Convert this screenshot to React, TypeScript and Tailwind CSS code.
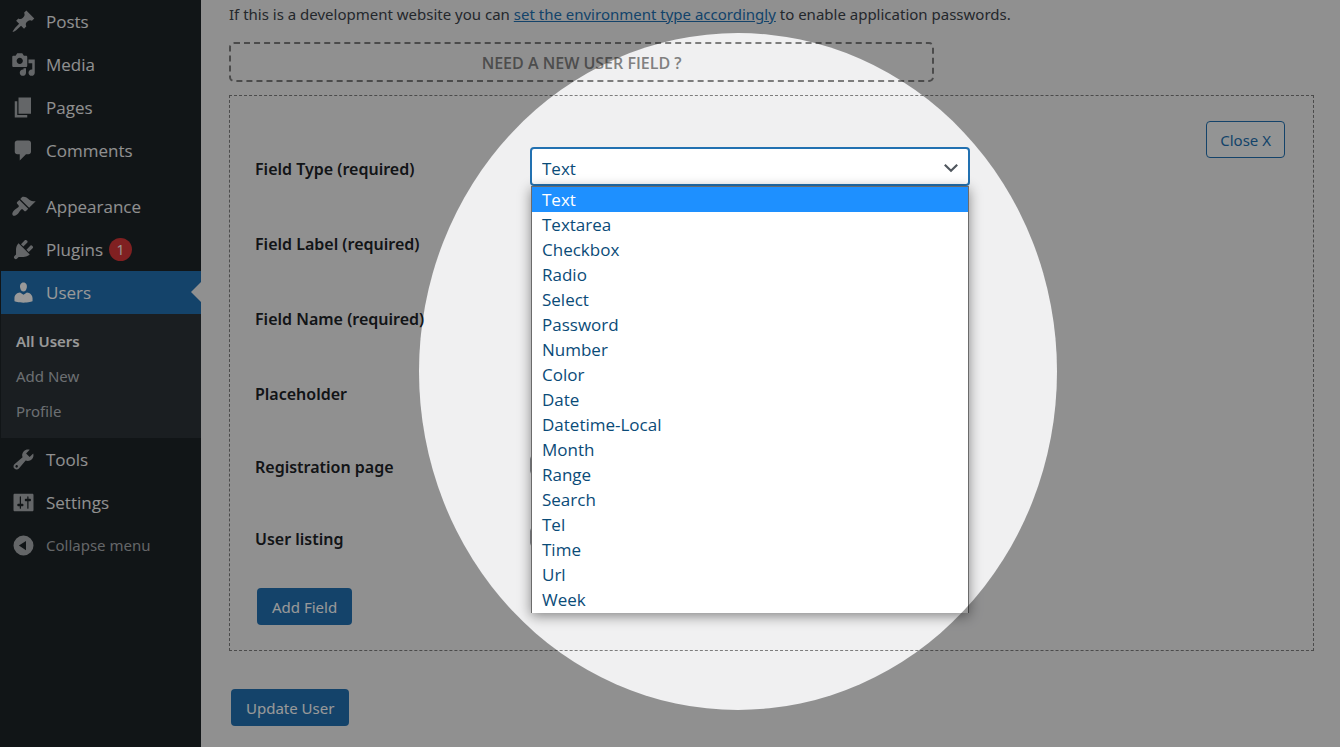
import type { ReactNode } from "react";

const icons = {
  post: "M10.44 3.02l1.82-1.82 6.36 6.35-1.83 1.82c-1.05-.68-2.48-.57-3.41.36l-.75.75c-.92.93-1.04 2.35-.35 3.41l-1.83 1.82-2.41-2.41-2.8 2.79c-.42.42-3.38 2.71-3.8 2.29s1.86-3.39 2.28-3.81l2.79-2.79L4.1 9.36l1.83-1.82c1.05.69 2.48.57 3.4-.36l.75-.75c.93-.92 1.05-2.35.36-3.41z",
  media:
    "M13 11V4c0-.55-.45-1-1-1h-1.67L9 1H5L3.67 3H2c-.55 0-1 .45-1 1v7c0 .55.45 1 1 1h10c.55 0 1-.45 1-1zM7 4.5c1.38 0 2.5 1.12 2.5 2.5S8.38 9.5 7 9.5 4.5 8.38 4.5 7 5.62 4.5 7 4.5zM14 6h5v10.5c0 1.38-1.12 2.5-2.5 2.5S14 17.88 14 16.5s1.12-2.5 2.5-2.5c.17 0 .34.02.5.05V9h-3V6zm-4 8.05V13h2v3.5c0 1.38-1.12 2.5-2.5 2.5S7 17.88 7 16.5 8.12 14 9.5 14c.17 0 .34.02.5.05z",
  page: "M6 15V2h10v13H6zm-1 1h8v2H3V5h2v11z",
  comment: "M5 2h9c1.1 0 2 .9 2 2v7c0 1.1-.9 2-2 2h-2l-5 5v-5H5c-1.1 0-2-.9-2-2V4c0-1.1.9-2 2-2z",
  appearance:
    "M14.48 11.06L7.41 3.99l1.5-1.5c.5-.56 2.3-.47 3.51.32 1.21.8 1.43 1.28 2.91 2.1 1.18.64 2.45 1.26 4.45.85zm-.71.71L6.7 4.7 4.93 6.47c-.39.39-.39 1.02 0 1.41l1.06 1.06c.39.39.39 1.03 0 1.42-.6.6-1.43 1.11-2.21 1.69-.35.26-.7.53-1.01.84C1.43 14.23.4 16.08 1.4 17.07c.99 1 2.84-.03 4.18-1.36.31-.31.58-.66.85-1.02.57-.78 1.08-1.61 1.69-2.21.39-.39 1.02-.39 1.41 0l1.06 1.06c.39.39 1.02.39 1.41 0z",
  plugins:
    "M13.11 4.36L9.87 7.6 8 5.73l3.24-3.24c.35-.34 1.05-.2 1.56.32.52.51.66 1.21.31 1.55zm-8 1.77l.91-1.12 9.01 9.01-1.19.84c-.71.71-2.63 1.16-3.82 1.16H6.14L4.9 17.26c-.59.59-1.54.59-2.12 0-.59-.58-.59-1.53 0-2.12l1.24-1.24v-3.88c0-1.13.4-3.19 1.09-3.89zm7.26 3.97l3.24-3.24c.34-.35 1.04-.21 1.55.31.52.51.66 1.21.31 1.55l-3.24 3.25z",
  users:
    "M10 9.25c-2.27 0-2.73-3.44-2.73-3.44C7 4.02 7.82 2 9.97 2c2.16 0 2.98 2.02 2.71 3.81 0 0-.41 3.44-2.68 3.44zm0 2.57L12.72 10c2.39 0 4.52 2.33 4.52 4.53v2.49s-3.65 1.13-7.24 1.13c-3.65 0-7.24-1.13-7.24-1.13v-2.49c0-2.25 1.94-4.48 4.47-4.48z",
  tools:
    "M16.68 9.77c-1.34 1.34-3.3 1.67-4.95.99l-5.41 6.52c-.99.99-2.59.99-3.58 0s-.99-2.59 0-3.57l6.52-5.42c-.68-1.65-.35-3.61.99-4.95 1.28-1.28 3.12-1.62 4.72-1.06l-2.89 2.89 2.82 2.82 2.86-2.87c.53 1.58.18 3.39-1.08 4.65zM3.81 16.21c.4.39 1.04.39 1.43 0 .4-.4.4-1.04 0-1.43-.39-.4-1.03-.4-1.43 0-.39.39-.39 1.03 0 1.43z",
  settings:
    "M18 16V4c0-.55-.45-1-1-1H3c-.55 0-1 .45-1 1v12c0 .55.45 1 1 1h14c.55 0 1-.45 1-1zM8 11h1c.55 0 1 .45 1 1s-.45 1-1 1H8v1.5c0 .28-.22.5-.5.5s-.5-.22-.5-.5V13H6c-.55 0-1-.45-1-1s.45-1 1-1h1V5.5c0-.28.22-.5.5-.5s.5.22.5.5V11zm5-2h-1c-.55 0-1-.45-1-1s.45-1 1-1h1V5.5c0-.28.22-.5.5-.5s.5.22.5.5V7h1c.55 0 1 .45 1 1s-.45 1-1 1h-1v5.5c0 .28-.22.5-.5.5s-.5-.22-.5-.5V9z",
  collapse: "M10 2a8 8 0 1 1 0 16 8 8 0 0 1 0-16zM12 6.3L6.3 10l5.7 3.7z",
};

type IconName = keyof typeof icons;

function Icon({ name }: { name: IconName }) {
  return (
    <svg viewBox="0 0 20 20" className="size-[25px] shrink-0" fill="currentColor" fillRule="evenodd" aria-hidden="true">
      <path d={icons[name]} />
    </svg>
  );
}

function MenuLink({ icon, label, badge }: { icon: IconName; label: string; badge?: number }) {
  return (
    <li>
      <a href="#" className="flex h-[43px] items-center gap-2.5 pl-2.5 text-[17px] text-[#f0f0f1]">
        <span className="text-[#a7aaad]">
          <Icon name={icon} />
        </span>
        <span className="flex items-center gap-1.5">
          {label}
          {badge !== undefined && (
            <span className="flex size-[23px] items-center justify-center rounded-full bg-[#d63638] text-sm text-white">
              {badge}
            </span>
          )}
        </span>
      </a>
    </li>
  );
}

function Sidebar() {
  return (
    <nav className="w-[201px] shrink-0 border-l border-[#1d2327] bg-[#1d2327]" aria-label="Main menu">
      <ul>
        <MenuLink icon="post" label="Posts" />
        <MenuLink icon="media" label="Media" />
        <MenuLink icon="page" label="Pages" />
        <MenuLink icon="comment" label="Comments" />
      </ul>
      <ul className="pt-[13px]">
        <MenuLink icon="appearance" label="Appearance" />
        <MenuLink icon="plugins" label="Plugins" badge={1} />
        <li>
          <a
            href="#"
            aria-current="page"
            className="relative flex h-[43px] items-center gap-2.5 bg-[#2271b1] pl-2.5 text-[17px] text-white"
          >
            <Icon name="users" />
            Users
            <span className="absolute right-0 top-[11px] border-y-10 border-r-10 border-y-transparent border-r-[#f0f0f1]" />
          </a>
          <ul className="bg-[#2c3338] pb-[9px] pl-[15px] pt-2.5 font-['Noto_Sans','Open_Sans',sans-serif] text-[15px] leading-[35px] text-[#b5babf]">
            <li>
              <a href="#" className="font-semibold text-white">
                All Users
              </a>
            </li>
            <li>
              <a href="#">Add New</a>
            </li>
            <li>
              <a href="#">Profile</a>
            </li>
          </ul>
        </li>
        <MenuLink icon="tools" label="Tools" />
        <MenuLink icon="settings" label="Settings" />
      </ul>
      <button type="button" className="flex h-[43px] w-full items-center gap-2.5 pl-2.5 font-['Noto_Sans','Open_Sans',sans-serif] text-[15px] text-[#a7aaad]">
        <Icon name="collapse" />
        Collapse menu
      </button>
    </nav>
  );
}

const fieldTypes = [
  "Text",
  "Textarea",
  "Checkbox",
  "Radio",
  "Select",
  "Password",
  "Number",
  "Color",
  "Date",
  "Datetime-Local",
  "Month",
  "Range",
  "Search",
  "Tel",
  "Time",
  "Url",
  "Week",
];

function FieldRow({
  id,
  label,
  compact = false,
  children,
}: {
  id: string;
  label: string;
  compact?: boolean;
  children: ReactNode;
}) {
  return (
    <div className={compact ? "flex h-[72px] items-center" : "flex h-[75px] items-center"}>
      <label
        htmlFor={id}
        className="w-[275px] shrink-0 pt-1 text-base font-semibold text-[#1d2327]"
      >
        {label}
      </label>
      {children}
    </div>
  );
}

function FieldTypeSelect() {
  return (
    <div className="relative w-[440px]">
      <select
        id="field-type"
        defaultValue="Text"
        className="block h-[39px] w-full appearance-none rounded-[4px] border-2 border-[#2271b1] bg-white pl-2.5 pt-1 font-['Open_Sans','Noto_Sans',sans-serif] text-[17px] text-[#0a4b78] outline-none"
      >
        {fieldTypes.map((type) => (
          <option key={type}>{type}</option>
        ))}
      </select>
      <svg
        viewBox="0 0 20 20"
        className="pointer-events-none absolute right-[9px] top-[11px] size-5"
        fill="none"
        stroke="#50575e"
        strokeWidth="2.2"
        aria-hidden="true"
      >
        <path d="M3.8 6.8L10 12.8l6.2-6" />
      </svg>
      <ul
        role="listbox"
        aria-label="Field type options"
        className="absolute inset-x-px top-full z-10 border-x border-t border-[#6b6b6b] bg-white pb-px font-['Open_Sans','Noto_Sans',sans-serif] text-[17px] leading-[25px] text-[#0a4b78] shadow-[0_3px_12px_rgba(0,0,0,0.45)]"
      >
        {fieldTypes.map((type, index) => (
          <li
            key={type}
            role="option"
            aria-selected={index === 0}
            className="px-2.5 aria-selected:bg-[#1e90ff] aria-selected:text-white"
          >
            {type}
          </li>
        ))}
      </ul>
    </div>
  );
}

const inputStyle = "ml-1 h-9 w-[430px] rounded-[4px] border border-[#8c8f94] bg-white px-2.5";
const checkboxStyle = "size-5 appearance-none rounded-[4px] border border-[#8c8f94] bg-white";
const primaryButton = "h-[37px] rounded-[4px] bg-[#2271b1] px-[15px] pt-0.5 text-[15px] text-white";

export default function App() {
  return (
    <div className="relative flex min-h-screen overflow-hidden bg-[#f0f0f1] font-['Open_Sans','Noto_Sans',sans-serif]">
      <Sidebar />
      <main className="min-w-0 flex-1 pb-5 pl-7 pr-[26px] pt-[3px] font-['Noto_Sans','Open_Sans',sans-serif]">
        <p className="text-[15px] leading-[22px] text-[#3c434a]">
          If this is a development website you can{" "}
          <a href="#" className="text-[#2271b1] underline">
            set the environment type accordingly
          </a>{" "}
          to enable application passwords.
        </p>
        <button
          type="button"
          className="mt-[17px] block h-10 w-[65%] rounded-[5px] border-2 border-dashed border-[#7d7d7d] pt-0.5 font-['Open_Sans','Noto_Sans',sans-serif] text-base font-semibold text-[#808080]"
        >
          NEED A NEW USER FIELD ?
        </button>

        <form className="mt-[13px]" onSubmit={(event) => event.preventDefault()}>
          <section className="relative border border-dashed border-[#7d7d7d] pb-[25px] pl-[25px] pr-7 pt-[33px]">
            <button
              type="button"
              className="absolute right-7 top-[25px] h-[37px] rounded-[4px] border border-[#2271b1] bg-[#f6f7f7] px-[13px] pt-0.5 text-[15px] text-[#2271b1]"
            >
              Close X
            </button>
            <FieldRow id="field-type" label="Field Type (required)">
              <FieldTypeSelect />
            </FieldRow>
            <FieldRow id="field-label" label="Field Label (required)">
              <input id="field-label" type="text" className={inputStyle} />
            </FieldRow>
            <FieldRow id="field-name" label="Field Name (required)">
              <input id="field-name" type="text" className={inputStyle} />
            </FieldRow>
            <FieldRow id="placeholder" label="Placeholder">
              <input id="placeholder" type="text" className={inputStyle} />
            </FieldRow>
            <FieldRow id="registration-page" label="Registration page" compact>
              <input id="registration-page" type="checkbox" className={checkboxStyle} />
            </FieldRow>
            <FieldRow id="user-listing" label="User listing" compact>
              <input id="user-listing" type="checkbox" className={checkboxStyle} />
            </FieldRow>
            <div className="pl-0.5 pt-[15px]">
              <button type="button" className={primaryButton}>
                Add Field
              </button>
            </div>
          </section>
          <button type="submit" className={"ml-0.5 mt-[38px] " + primaryButton}>
            Update User
          </button>
        </form>
      </main>

      {/* Spotlight: everything outside the ellipse is dimmed */}
      <div className="pointer-events-none absolute left-[419px] top-[33px] z-20 h-[677px] w-[638px] rounded-[50%] shadow-[0_0_0_1500px_rgba(0,0,0,0.4)]" />
    </div>
  );
}
